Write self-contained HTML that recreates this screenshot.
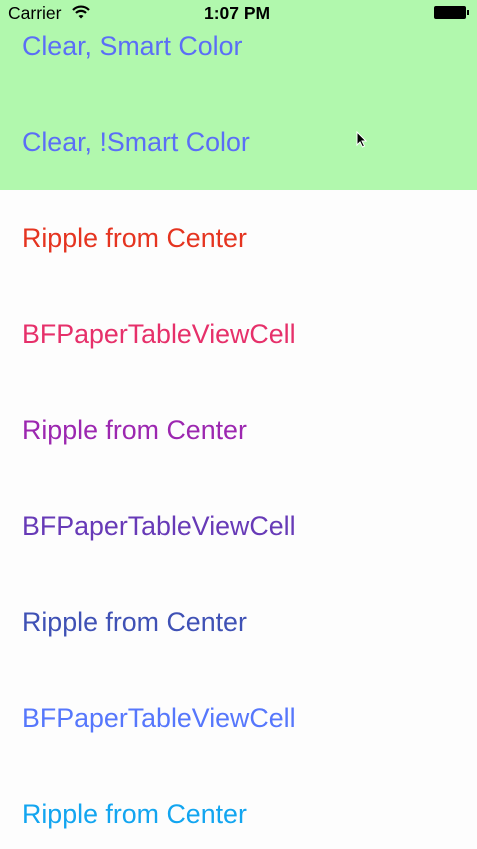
<!DOCTYPE html>
<html><head><style>
body{margin:0;width:477px;height:849px;overflow:hidden;background:#fdfdfd;font-family:"Liberation Sans",Arial,sans-serif;position:relative}
.g{position:absolute;left:0;top:0;width:477px;height:190px;background:#b1f8ad}
.t{position:absolute;left:22px;font-size:26.8px;line-height:30px;white-space:nowrap}
.sb{position:absolute;top:3px;font-size:17.5px;line-height:20px;color:#000}
</style></head><body>
<div class="g"></div>
<div class="sb" style="left:8px">Carrier</div>
<svg style="position:absolute;left:72px;top:5px" width="18" height="14" viewBox="0 0 18 14"><path d="M1 5 A11 11 0 0 1 17 5" stroke="#000" stroke-width="2.2" fill="none"/><path d="M4 8 A7 7 0 0 1 14 8" stroke="#000" stroke-width="2.2" fill="none"/><path d="M6.5 11 L9 13.5 L11.5 11 A3.5 3.5 0 0 0 6.5 11Z" fill="#000"/></svg>
<div class="sb" style="left:204px;font-weight:bold">1:07 PM</div>
<div style="position:absolute;left:434px;top:6px;width:30px;height:11px;border:1px solid #000;border-radius:2px;background:#000"></div>
<div style="position:absolute;left:467px;top:10px;width:2px;height:5px;background:#000"></div>
<div class="t" style="top:31px;color:#5b6ef6">Clear, Smart Color</div>
<div class="t" style="top:127px;color:#5b6ef6">Clear, !Smart Color</div>
<svg style="position:absolute;left:356px;top:131px" width="12" height="18" viewBox="0 0 12 18"><path d="M1 1 L1 14 L4 11 L6.5 16 L8.5 15 L6 10 L10 10 Z" fill="#000" stroke="#fff" stroke-width="1"/></svg>
<div class="t" style="top:223px;color:#e53420">Ripple from Center</div>
<div class="t" style="top:319px;color:#e6306a">BFPaperTableViewCell</div>
<div class="t" style="top:415px;color:#9c27b0">Ripple from Center</div>
<div class="t" style="top:511px;color:#673ab7">BFPaperTableViewCell</div>
<div class="t" style="top:607px;color:#3f51b5">Ripple from Center</div>
<div class="t" style="top:703px;color:#5677fc">BFPaperTableViewCell</div>
<div class="t" style="top:799px;color:#12a5f0">Ripple from Center</div>
</body></html>
